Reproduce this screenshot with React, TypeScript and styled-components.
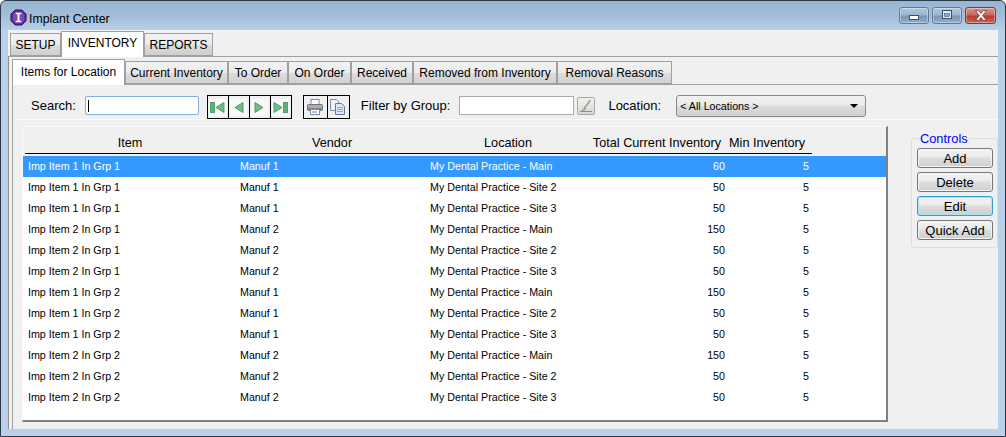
import React from 'react';
import styled, { createGlobalStyle } from 'styled-components';

const GlobalStyle = createGlobalStyle`
  html, body {
    margin: 0;
    padding: 0;
    background: #fff;
  }
  * {
    box-sizing: border-box;
  }
`;

const Window = styled.div`
  width: 1006px;
  height: 437px;
  display: flex;
  flex-direction: column;
  overflow: hidden;
  border: 1px solid #2b3a44;
  border-radius: 6px 6px 0 0;
  background: linear-gradient(180deg, #97b5d3 0, #a3bfdb 16px, #b9d1ea 30px, #b9d1ea 100%);
  font-family: "Liberation Sans", Arial, sans-serif;
  color: #000;
`;

const TitleBar = styled.div`
  height: 29px;
  flex: none;
  display: flex;
  align-items: center;
  padding: 4px 9px 0 9px;
`;

const TitleText = styled.span`
  font-size: 12.3px;
  margin-left: 2px;
  margin-top: 2px;
  flex: 1;
`;

const WinButton = styled.div<{ $close?: boolean }>`
  width: ${(p) => (p.$close ? '31px' : '30px')};
  height: 17px;
  margin-left: 3px;
  margin-top: -5px;
  display: flex;
  align-items: center;
  justify-content: center;
  border: 1px solid ${(p) => (p.$close ? '#7e3a32' : '#5f7b98')};
  border-radius: 3px;
  box-shadow: inset 0 0 0 1px rgba(255, 255, 255, 0.35);
  background: ${(p) =>
    p.$close
      ? 'linear-gradient(180deg, #d8988e 0, #c9685c 45%, #b8392c 55%, #c96a55 100%)'
      : 'linear-gradient(180deg, #b0c8df 0, #9bb6d1 45%, #7896b7 55%, #93b0cd 100%)'};
`;

const Body = styled.div`
  flex: 1;
  margin: 0 7px 7px;
  background: #f0f0f0;
  display: flex;
  flex-direction: column;
  min-height: 0;
`;

const MainTabs = styled.div`
  height: 27px;
  flex: none;
  display: flex;
  align-items: flex-end;
  padding-left: 2px;
  border-bottom: 1px solid #a0a0a0;
`;

const MainTab = styled.div<{ $active?: boolean; $w: number }>`
  width: ${(p) => p.$w}px;
  height: ${(p) => (p.$active ? '26px' : '23px')};
  margin-bottom: ${(p) => (p.$active ? '-1px' : '0')};
  font-size: 12px;
  display: flex;
  align-items: center;
  justify-content: center;
  padding-bottom: ${(p) => (p.$active ? '3px' : '0')};
  border: 1px solid #a0a0a0;
  border-bottom: ${(p) => (p.$active ? 'none' : '1px solid #a0a0a0')};
  background: ${(p) => (p.$active ? '#ffffff' : 'linear-gradient(180deg, #f2f2f2 0, #ebebeb 50%, #dcdcdc 51%, #cfcfcf 100%)')};
  z-index: ${(p) => (p.$active ? 1 : 0)};
`;

const MainPanel = styled.div`
  flex: 1;
  min-height: 0;
  display: flex;
  flex-direction: column;
  border-left: 1px solid #8e8e8e;
  padding: 2px 0 0 3px;
`;

const SubTabs = styled.div`
  height: 26px;
  flex: none;
  display: flex;
  align-items: flex-end;
  border-bottom: 1px solid #a0a0a0;
`;

const SubTab = styled.div<{ $active?: boolean; $w: number }>`
  width: ${(p) => p.$w}px;
  height: ${(p) => (p.$active ? '26px' : '23px')};
  margin-bottom: ${(p) => (p.$active ? '-1px' : '0')};
  font-size: 12px;
  display: flex;
  align-items: center;
  justify-content: center;
  padding-bottom: ${(p) => (p.$active ? '2px' : '0')};
  border: 1px solid #a0a0a0;
  border-bottom: ${(p) => (p.$active ? 'none' : '1px solid #a0a0a0')};
  background: ${(p) => (p.$active ? '#ffffff' : 'linear-gradient(180deg, #f2f2f2 0, #ebebeb 50%, #dcdcdc 51%, #d2d2d2 100%)')};
  z-index: ${(p) => (p.$active ? 1 : 0)};
`;

const SubPanel = styled.div`
  flex: 1;
  min-height: 0;
  display: flex;
  flex-direction: column;
  border-left: 1px solid #a0a0a0;
  padding-left: 3px;
`;

const Toolbar = styled.div`
  height: 35px;
  flex: none;
  display: flex;
  align-items: center;
  padding: 10px 0 0;
  border-bottom: 1px solid #fafafa;
`;

const Label = styled.span<{ $left: number }>`
  font-size: 13px;
  margin-left: ${(p) => p.$left}px;
  margin-top: -4px;
  white-space: nowrap;
`;

const TextInput = styled.div<{ $w: number; $left: number; $focus?: boolean }>`
  width: ${(p) => p.$w}px;
  height: 19px;
  margin-left: ${(p) => p.$left}px;
  background: #fff;
  border: 1px solid ${(p) => (p.$focus ? '#7eb4ea' : '#ababab')};
  border-radius: ${(p) => (p.$focus ? '2px' : '0')};
  padding: 3px 2px;
  margin-top: -3px;
`;

const Caret = styled.div`
  width: 1px;
  height: 12px;
  background: #000;
`;

const IconGroup = styled.div<{ $left: number }>`
  display: flex;
  height: 24px;
  margin-left: ${(p) => p.$left}px;
  border: 1px solid #000;
`;

const IconButton = styled.div<{ $w: number }>`
  width: ${(p) => p.$w}px;
  display: flex;
  align-items: center;
  justify-content: center;
  background: #f0f0f0;
  & + & {
    border-left: 1px solid #000;
  }
`;

const LookupButton = styled.div`
  width: 18px;
  height: 18px;
  margin-left: 3px;
  margin-top: -3px;
  display: flex;
  align-items: center;
  justify-content: center;
  border: 1px solid #a8a8a8;
  border-radius: 2px;
  background: linear-gradient(180deg, #f0f0f0, #d8d8d8);
`;

const Select = styled.div`
  width: 190px;
  height: 22px;
  margin-left: 15px;
  margin-top: -3px;
  display: flex;
  align-items: center;
  justify-content: space-between;
  padding: 0 7px 0 3px;
  font-size: 10.7px;
  border: 1px solid #8a8a8a;
  border-radius: 3px;
  background: linear-gradient(180deg, #f2f2f2 0, #ebebeb 45%, #dddddd 50%, #cfcfcf 100%);
`;

const SelectArrow = styled.div`
  width: 0;
  height: 0;
  border-left: 4px solid transparent;
  border-right: 4px solid transparent;
  border-top: 4px solid #000;
`;

const Content = styled.div`
  flex: 1;
  min-height: 0;
  display: flex;
  align-items: flex-start;
  padding: 6px 0 0 6px;
`;

const GridPanel = styled.div`
  width: 866px;
  height: 296px;
  flex: none;
  display: flex;
  flex-direction: column;
  border-top: 1px solid #fafafa;
  border-left: 1px solid #fafafa;
  border-right: 2px solid #808080;
  border-bottom: 2px solid #808080;
  background: #fff;
`;

const HeaderRow = styled.div`
  height: 29px;
  flex: none;
  display: flex;
  padding-bottom: 2px;
  background: #f0f0f0;
`;

const HeaderCells = styled.div`
  width: 787px;
  margin-left: 2px;
  display: grid;
  grid-template-columns: 210px 190px 160px 144px 83px;
  align-items: center;
  font-size: 12.7px;
  padding-top: 6px;
  border-bottom: 1px solid #000;
`;

const HeaderCell = styled.div<{ $nudge?: number }>`
  text-align: center;
  white-space: nowrap;
  padding-right: ${(p) => (p.$nudge && p.$nudge > 0 ? p.$nudge : 0)}px;
  padding-left: ${(p) => (p.$nudge && p.$nudge < 0 ? -p.$nudge : 0)}px;
`;

const Row = styled.div<{ $selected?: boolean }>`
  height: 21px;
  flex: none;
  display: grid;
  grid-template-columns: 212px 190px 160px 144px 84px 1fr;
  align-items: center;
  padding-bottom: 1px;
  font-size: 10.7px;
  background: ${(p) => (p.$selected ? '#3399ff' : 'transparent')};
  color: ${(p) => (p.$selected ? '#fff' : '#000')};
`;

const Cell = styled.div<{ $right?: boolean }>`
  white-space: nowrap;
  text-align: ${(p) => (p.$right ? 'right' : 'left')};
  padding: ${(p) => (p.$right ? '0 4px 0 0' : '0 0 0 5px')};
`;

const Controls = styled.fieldset`
  width: 87px;
  height: 117px;
  flex: none;
  margin: 5px 0 0 23px;
  padding: 2px 0 0 5px;
  border: 1px solid #dcdcdc;
  border-radius: 3px;
  display: flex;
  flex-direction: column;
  gap: 4px;
`;

const ControlsLegend = styled.legend`
  font-size: 12.8px;
  color: #0000ff;
  padding: 0 1px;
  margin-left: 2px;
`;

const ControlButton = styled.div<{ $focus?: boolean }>`
  width: 76px;
  height: 20px;
  display: flex;
  align-items: center;
  justify-content: center;
  font-size: 13px;
  border: 1px solid ${(p) => (p.$focus ? '#2f9fd0' : '#777')};
  border-radius: 3px;
  box-shadow: inset 0 0 0 1px ${(p) => (p.$focus ? '#a8e4f8' : '#f4f4f4')};
  background: linear-gradient(180deg, #f2f2f2 0, #ebebeb 45%, #dddddd 50%, #cfcfcf 100%);
`;

type RowData = [string, string, string, number];

const rows: RowData[] = [
  ['Imp Item 1 In Grp 1', 'Manuf 1', 'My Dental Practice - Main', 60],
  ['Imp Item 1 In Grp 1', 'Manuf 1', 'My Dental Practice - Site 2', 50],
  ['Imp Item 1 In Grp 1', 'Manuf 1', 'My Dental Practice - Site 3', 50],
  ['Imp Item 2 In Grp 1', 'Manuf 2', 'My Dental Practice - Main', 150],
  ['Imp Item 2 In Grp 1', 'Manuf 2', 'My Dental Practice - Site 2', 50],
  ['Imp Item 2 In Grp 1', 'Manuf 2', 'My Dental Practice - Site 3', 50],
  ['Imp Item 1 In Grp 2', 'Manuf 1', 'My Dental Practice - Main', 150],
  ['Imp Item 1 In Grp 2', 'Manuf 1', 'My Dental Practice - Site 2', 50],
  ['Imp Item 1 In Grp 2', 'Manuf 1', 'My Dental Practice - Site 3', 50],
  ['Imp Item 2 In Grp 2', 'Manuf 2', 'My Dental Practice - Main', 150],
  ['Imp Item 2 In Grp 2', 'Manuf 2', 'My Dental Practice - Site 2', 50],
  ['Imp Item 2 In Grp 2', 'Manuf 2', 'My Dental Practice - Site 3', 50],
];

const subTabs: [string, number][] = [
  ['Items for Location', 113],
  ['Current Inventory', 103],
  ['To Order', 60],
  ['On Order', 63],
  ['Received', 62],
  ['Removed from Inventory', 144],
  ['Removal Reasons', 115],
];

const AppIcon = () => (
  <svg width="17" height="17" viewBox="0 0 18 18">
    <polygon points="5.5,1 12.5,1 17,5.5 17,12.5 12.5,17 5.5,17 1,12.5 1,5.5" fill="#5a2a92" stroke="#2f1560" />
    <polygon points="6,3 12,3 15,6 15,12 12,15 6,15 3,12 3,6" fill="#7a48b8" />
    <path d="M6 4h6v1.6h-2v6.8h2V14H6v-1.6h2V5.6H6z" fill="#fff" />
  </svg>
);

const MinGlyph = () => (
  <svg width="12" height="12" viewBox="0 0 12 12">
    <rect x="1.5" y="6.5" width="9" height="4" fill="#fff" stroke="#3d4f63" />
  </svg>
);

const MaxGlyph = () => (
  <svg width="12" height="10" viewBox="0 0 12 10">
    <rect x="1.5" y="0.5" width="9" height="8" fill="#dfe8f2" stroke="#3d4f63" />
    <rect x="3.5" y="3.5" width="5" height="3" fill="#8fa8c2" stroke="#3d4f63" strokeWidth="0.5" />
  </svg>
);

const CloseGlyph = () => (
  <svg width="14" height="11" viewBox="0 0 14 11">
    <path d="M1.5 0.5h3L7 3.5 9.5 0.5h3L8.7 5.5l3.8 5h-3L7 7.5 4.5 10.5h-3l3.8-5z" fill="#fff" stroke="#6e2b24" strokeWidth="0.7" />
  </svg>
);

// first/prev/next/last arrows on a pale square, the right ones are mirrored
const NavIcon = ({ dir, bar }: { dir: 'left' | 'right'; bar?: boolean }) => (
  <svg width="17" height="17" viewBox="0 0 17 17" style={{ transform: dir === 'right' ? 'scaleX(-1)' : undefined }}>
    <rect width="17" height="17" fill="#f8f8f8" />
    {bar && <rect x="1.5" y="3.5" width="4" height="10" fill="#62b078" stroke="#4f9f68" />}
    <polygon points={bar ? '15,3.5 15,13.5 7,8.5' : '13,3.5 13,13.5 5,8.5'} fill="#74b98a" stroke="#4f9f68" />
  </svg>
);

const PrintIcon = () => (
  <svg width="18" height="18" viewBox="0 0 18 18">
    <rect x="5" y="1.5" width="8" height="5" fill="#fff" stroke="#8a8a8a" />
    <rect x="1.5" y="6.5" width="15" height="6" rx="1" fill="#a9aeb3" stroke="#6f757a" />
    <rect x="1.5" y="10" width="15" height="2.5" fill="#7d8388" />
    <rect x="4.5" y="11.5" width="9" height="5" fill="#fff" stroke="#7e8c9c" />
    <path d="M6 14h5" stroke="#5c88bb" />
  </svg>
);

const CopyIcon = () => (
  <svg width="18" height="18" viewBox="0 0 18 18">
    <path d="M1.5 1.5h6l2 2v9h-8z" fill="#eef2f8" stroke="#7f8fa8" />
    <path d="M6.5 5.5h6l3 3v8h-9z" fill="#dfe7f3" stroke="#66779a" />
    <path d="M8 9.5h6M8 11.5h6M8 13.5h6" stroke="#8fa3c4" />
  </svg>
);

const BrushIcon = () => (
  <svg width="14" height="14" viewBox="0 0 14 14">
    <path d="M11.5 1 5.5 9" stroke="#a8977a" strokeWidth="1.4" />
    <path d="M5.5 8.5 3 12l3.5-1.5z" fill="#c9b48e" stroke="#8a7a5e" strokeWidth="0.5" />
    <path d="M1 12.5h12" stroke="#8c8c8c" />
  </svg>
);

const App = () => {
  return (
    <>
      <GlobalStyle />
      <Window>
        <TitleBar>
          <AppIcon />
          <TitleText>Implant Center</TitleText>
          <WinButton><MinGlyph /></WinButton>
          <WinButton><MaxGlyph /></WinButton>
          <WinButton $close><CloseGlyph /></WinButton>
        </TitleBar>
        <Body>
          <MainTabs>
            <MainTab $w={51}>SETUP</MainTab>
            <MainTab $w={83} $active>INVENTORY</MainTab>
            <MainTab $w={69}>REPORTS</MainTab>
          </MainTabs>
          <MainPanel>
            <SubTabs>
              {subTabs.map(([label, w], i) => (
                <SubTab key={label} $w={w} $active={i === 0}>{label}</SubTab>
              ))}
            </SubTabs>
            <SubPanel>
              <Toolbar>
                <Label $left={15}>Search:</Label>
                <TextInput $w={114} $left={9} $focus><Caret /></TextInput>
                <IconGroup $left={8}>
                  <IconButton $w={20}><NavIcon dir="left" bar /></IconButton>
                  <IconButton $w={21}><NavIcon dir="left" /></IconButton>
                  <IconButton $w={21}><NavIcon dir="right" /></IconButton>
                  <IconButton $w={21}><NavIcon dir="right" bar /></IconButton>
                </IconGroup>
                <IconGroup $left={11}>
                  <IconButton $w={23}><PrintIcon /></IconButton>
                  <IconButton $w={22}><CopyIcon /></IconButton>
                </IconGroup>
                <Label $left={11}>Filter by Group:</Label>
                <TextInput $w={115} $left={9} />
                <LookupButton><BrushIcon /></LookupButton>
                <Label $left={13}>Location:</Label>
                <Select>
                  &lt; All Locations &gt;
                  <SelectArrow />
                </Select>
              </Toolbar>
              <Content>
                <GridPanel>
                  <HeaderRow>
                    <HeaderCells>
                      <HeaderCell>Item</HeaderCell>
                      <HeaderCell $nudge={-4}>Vendor</HeaderCell>
                      <HeaderCell $nudge={-6}>Location</HeaderCell>
                      <HeaderCell>Total Current Inventory</HeaderCell>
                      <HeaderCell $nudge={8}>Min Inventory</HeaderCell>
                    </HeaderCells>
                  </HeaderRow>
                  {rows.map(([item, vendor, location, total], i) => (
                    <Row key={i} $selected={i === 0}>
                      <Cell>{item}</Cell>
                      <Cell>{vendor}</Cell>
                      <Cell>{location}</Cell>
                      <Cell $right>{total}</Cell>
                      <Cell $right>5</Cell>
                    </Row>
                  ))}
                </GridPanel>
                <Controls>
                  <ControlsLegend>Controls</ControlsLegend>
                  <ControlButton>Add</ControlButton>
                  <ControlButton>Delete</ControlButton>
                  <ControlButton $focus>Edit</ControlButton>
                  <ControlButton>Quick Add</ControlButton>
                </Controls>
              </Content>
            </SubPanel>
          </MainPanel>
        </Body>
      </Window>
    </>
  );
};

export default App;
